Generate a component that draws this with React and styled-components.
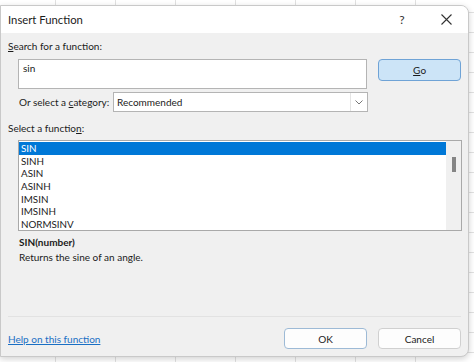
import styled, { createGlobalStyle } from "styled-components";

const GlobalStyle = createGlobalStyle`
  body {
    margin: 0;
    padding-top: 5px;
    background-color: #ffffff;
    background-image:
      linear-gradient(to right, #e1e1e1 1px, transparent 1px),
      linear-gradient(to bottom, #e1e1e1 1px, transparent 1px);
    background-size: 60px 20px;
    background-position: 55px 0, 0 12px;
    font-family: Lato, "Noto Sans", sans-serif;
    color: #1b1b1b;
    height: 362px;
    overflow: hidden;
  }
`;

const Dialog = styled.div`
  width: 469px;
  height: 352px;
  box-sizing: border-box;
  display: flex;
  flex-direction: column;
  background: #f0f0f0;
  border: 1px solid #c9c9c9;
  border-radius: 0 8px 8px 0;
  box-shadow: 0 2px 6px rgba(0, 0, 0, 0.18);
  overflow: hidden;
`;

const TitleBar = styled.div`
  height: 27px;
  flex-shrink: 0;
  display: flex;
  align-items: center;
  background: #ffffff;
  padding-left: 7px;
  font-size: 11.3px;
`;

const Title = styled.div`
  flex: 1;
`;

const TitleButton = styled.div`
  width: 44px;
  display: flex;
  justify-content: center;
  align-items: center;
  font-size: 12px;
  color: #333;
`;

const Body = styled.div`
  flex: 1;
  display: flex;
  flex-direction: column;
  padding: 0 7px;
  font-size: 10px;
`;

const Label = styled.div`
  height: 12px;
  line-height: 12px;
  margin-top: ${(p) => p.$top || 0}px;
  white-space: nowrap;
`;

const Key = styled.span`
  text-decoration: underline;
  text-underline-offset: 1px;
`;

const SearchRow = styled.div`
  display: flex;
  align-items: flex-start;
  gap: 11px;
  margin-top: 7px;
  padding-left: 10px;
`;

const SearchBox = styled.div`
  width: 350px;
  height: 30px;
  box-sizing: border-box;
  background: #fff;
  border: 1px solid #b4b4b4;
  padding: 2px 4px;
`;

const Button = styled.div`
  width: 83px;
  height: ${(p) => p.$h || 21}px;
  box-sizing: border-box;
  display: flex;
  align-items: center;
  justify-content: center;
  border-radius: 4px;
  background: ${(p) => (p.$active ? "#cce4f7" : "#fdfdfd")};
  border: 1px solid ${(p) => (p.$active ? "#6fa3d6" : p.$default ? "#9dbad6" : "#d0d0d0")};
`;

const CategoryRow = styled.div`
  display: flex;
  align-items: center;
  margin-top: 3px;
  padding-left: 11px;
`;

const CategoryLabel = styled.div`
  width: 94px;
  white-space: nowrap;
`;

const Select = styled.div`
  width: 255px;
  height: 20px;
  box-sizing: border-box;
  display: flex;
  align-items: center;
  background: #fff;
  border: 1px solid #b4b4b4;
  padding-left: 3px;
`;

const SelectText = styled.div`
  flex: 1;
`;

const Chevron = styled.div`
  width: 16px;
  height: 100%;
  display: flex;
  align-items: center;
  justify-content: center;
  border-left: 1px solid #e4e4e4;
`;

const ListBox = styled.div`
  width: 444px;
  height: 91px;
  box-sizing: border-box;
  display: flex;
  margin: 6px 0 0 10px;
  background: #fff;
  border: 1px solid #a9a9a9;
`;

const Items = styled.div`
  flex: 1;
  padding-top: 1px;
`;

const Item = styled.div`
  height: 12.7px;
  line-height: 12.7px;
  padding-left: 2px;
  font-size: 9.8px;
  background: ${(p) => (p.$selected ? "#0078d7" : "transparent")};
  color: ${(p) => (p.$selected ? "#fff" : "#1b1b1b")};
`;

const ScrollTrack = styled.div`
  width: 15px;
  background: #f0f0f0;
  padding-top: 16px;
  display: flex;
  justify-content: center;
`;

const Thumb = styled.div`
  width: 4px;
  height: 15px;
  background: #858585;
`;

const Description = styled.div`
  flex: 1;
  padding-left: 11px;
`;

const Signature = styled.div`
  font-weight: 700;
  margin-top: 5px;
  height: 12px;
  line-height: 12px;
`;

const Summary = styled.div`
  margin-top: 3px;
  height: 12px;
  line-height: 12px;
`;

const Footer = styled.div`
  display: flex;
  align-items: center;
  gap: 11px;
  border-top: 1px solid #e2e2e2;
  padding: 11px 0 7px;
`;

const HelpLink = styled.a`
  flex: 1;
  color: #1a6fc4;
  text-decoration: underline;
`;

const ChevronIcon = () => (
  <svg width="8" height="5" viewBox="0 0 8 5">
    <path d="M0.5 0.5 L4 4 L7.5 0.5" fill="none" stroke="#777" strokeWidth="1" />
  </svg>
);

const CloseIcon = () => (
  <svg width="11" height="11" viewBox="0 0 11 11">
    <path d="M0.5 0.5 L10.5 10.5 M10.5 0.5 L0.5 10.5" stroke="#333" strokeWidth="1.1" />
  </svg>
);

const functions = ["SIN", "SINH", "ASIN", "ASINH", "IMSIN", "IMSINH", "NORMSINV"];

export default function App() {
  return (
    <>
      <GlobalStyle />
      <Dialog>
        <TitleBar>
          <Title>Insert Function</Title>
          <TitleButton>?</TitleButton>
          <TitleButton>
            <CloseIcon />
          </TitleButton>
        </TitleBar>
        <Body>
          <Label $top={7}>
            <Key>S</Key>earch for a function:
          </Label>
          <SearchRow>
            <SearchBox>sin</SearchBox>
            <Button $active $h={22}>
              <Key>G</Key>o
            </Button>
          </SearchRow>
          <CategoryRow>
            <CategoryLabel>
              Or select a <Key>c</Key>ategory:
            </CategoryLabel>
            <Select>
              <SelectText>Recommended</SelectText>
              <Chevron>
                <ChevronIcon />
              </Chevron>
            </Select>
          </CategoryRow>
          <Label $top={10}>
            Select a functio<Key>n</Key>:
          </Label>
          <ListBox>
            <Items>
              {functions.map((f, i) => (
                <Item key={f} $selected={i === 0}>
                  {f}
                </Item>
              ))}
            </Items>
            <ScrollTrack>
              <Thumb />
            </ScrollTrack>
          </ListBox>
          <Description>
            <Signature>SIN(number)</Signature>
            <Summary>Returns the sine of an angle.</Summary>
          </Description>
          <Footer>
            <HelpLink href="#">Help on this function</HelpLink>
            <Button $default>OK</Button>
            <Button>Cancel</Button>
          </Footer>
        </Body>
      </Dialog>
    </>
  );
}
